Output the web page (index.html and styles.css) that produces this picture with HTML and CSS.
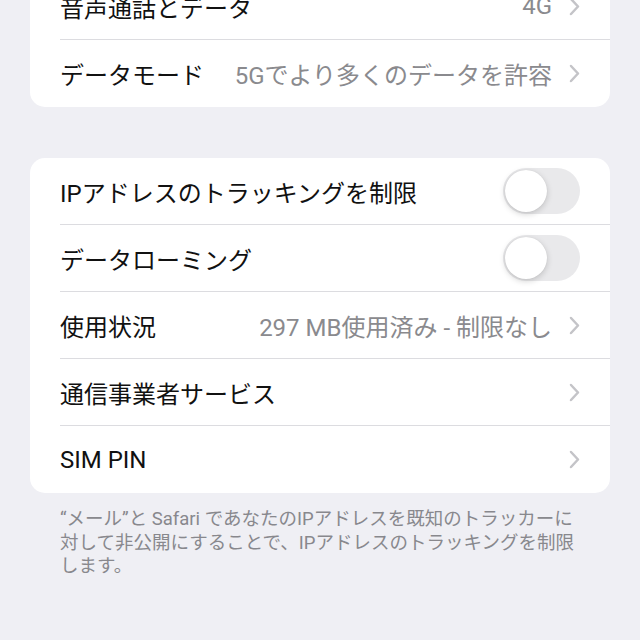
FILE: index.html
```html
<!DOCTYPE html>
<html lang="ja">
<head>
    <meta charset="UTF-8">
    <meta name="viewport" content="width=device-width, initial-scale=1.0">
    <title>モバイル通信オプション</title>
    <link rel="stylesheet" href="styles.css">
</head>
<body>
    <div class="page">
        <div class="group group-top">
            <div class="row">
                <div class="row-inner">
                    <span class="label">音声通話とデータ</span>
                    <span class="value">4G</span>
                    <svg class="chevron" width="11" height="19" viewBox="0 0 11 19"><path d="M2 2 L9 9.5 L2 17"/></svg>
                </div>
            </div>
            <div class="row">
                <div class="row-inner">
                    <span class="label">データモード</span>
                    <span class="value">5Gでより多くのデータを許容</span>
                    <svg class="chevron" width="11" height="19" viewBox="0 0 11 19"><path d="M2 2 L9 9.5 L2 17"/></svg>
                </div>
            </div>
        </div>

        <div class="group">
            <div class="row">
                <div class="row-inner">
                    <span class="label">IPアドレスのトラッキングを制限</span>
                    <span class="switch"><span class="knob"></span></span>
                </div>
            </div>
            <div class="row">
                <div class="row-inner">
                    <span class="label">データローミング</span>
                    <span class="switch"><span class="knob"></span></span>
                </div>
            </div>
            <div class="row">
                <div class="row-inner">
                    <span class="label">使用状況</span>
                    <span class="value">297 MB使用済み - 制限なし</span>
                    <svg class="chevron" width="11" height="19" viewBox="0 0 11 19"><path d="M2 2 L9 9.5 L2 17"/></svg>
                </div>
            </div>
            <div class="row">
                <div class="row-inner">
                    <span class="label">通信事業者サービス</span>
                    <span class="value"></span>
                    <svg class="chevron" width="11" height="19" viewBox="0 0 11 19"><path d="M2 2 L9 9.5 L2 17"/></svg>
                </div>
            </div>
            <div class="row">
                <div class="row-inner">
                    <span class="label">SIM PIN</span>
                    <span class="value"></span>
                    <svg class="chevron" width="11" height="19" viewBox="0 0 11 19"><path d="M2 2 L9 9.5 L2 17"/></svg>
                </div>
            </div>
        </div>

        <p class="footnote">“メール”と Safari であなたのIPアドレスを既知のトラッカーに対して非公開にすることで、IPアドレスのトラッキングを制限します。</p>
    </div>
</body>
</html>
```

FILE: styles.css
```css
body {
    margin: 0;
    background-color: #efeff4;
    font-family: Roboto, "Noto Sans CJK JP", sans-serif;
    overflow: hidden;
}

.page {
    padding: 0 30px;
}

.group {
    background-color: white;
    border-radius: 15px;
    overflow: hidden;
    margin-top: 51px;
}

.group-top {
    margin-top: -27px;
}

.row {
    padding-left: 30px;
}

.row-inner {
    display: flex;
    align-items: center;
    height: 67px;
    box-sizing: border-box;
    padding-right: 30px;
    border-bottom: 1px solid #dcdce0;
}

.row:last-child .row-inner {
    border-bottom: none;
}

.label {
    font-size: 24px;
    color: #111;
    white-space: nowrap;
}

.value {
    flex: 1;
    text-align: right;
    font-size: 24px;
    color: #8a8a8e;
    white-space: nowrap;
}

.chevron {
    margin-left: 17px;
    fill: none;
    stroke: #c4c4c8;
    stroke-width: 2.5;
    stroke-linecap: round;
    stroke-linejoin: round;
}

.switch {
    margin-left: auto;
    width: 77px;
    height: 46px;
    border-radius: 23px;
    background-color: #e9e9eb;
    padding: 2px;
    box-sizing: border-box;
    display: flex;
}

.knob {
    width: 42px;
    height: 42px;
    border-radius: 50%;
    background-color: white;
    box-shadow: 0 2px 6px rgba(0, 0, 0, 0.18), 0 0 1px rgba(0, 0, 0, 0.1);
}

.footnote {
    margin: 15px 0 0;
    padding: 0 30px;
    font-size: 18.5px;
    line-height: 23.5px;
    color: #88888d;
}
```
